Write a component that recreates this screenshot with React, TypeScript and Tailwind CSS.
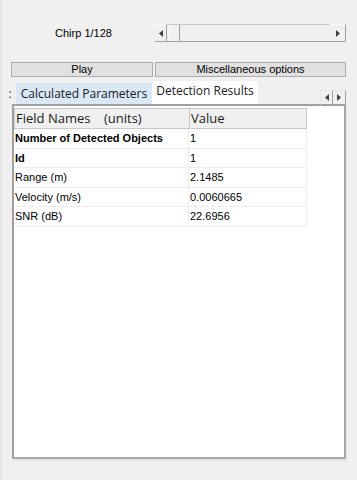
import React from "react";

const rows: { name: string; value: string; bold?: boolean }[] = [
  { name: "Number of Detected Objects", value: "1", bold: true },
  { name: "Id", value: "1", bold: true },
  { name: "Range (m)", value: "2.1485" },
  { name: "Velocity (m/s)", value: "0.0060665" },
  { name: "SNR (dB)", value: "22.6956" },
];

function ArrowBox({ dir, className }: { dir: "l" | "r"; className?: string }) {
  return (
    <div
      className={
        "flex items-center justify-center bg-[#f0f0f0] border-r border-b border-[#a0a0a0] " +
        (className ?? "")
      }
    >
      <svg width="4" height="7" viewBox="0 0 4 7">
        {dir === "l" ? (
          <path d="M4 0 L0 3.5 L4 7 Z" fill="#404040" />
        ) : (
          <path d="M0 0 L4 3.5 L0 7 Z" fill="#404040" />
        )}
      </svg>
    </div>
  );
}

export default function App() {
  return (
    <div
      className="w-[357px] h-[480px] bg-[#f0f0f0] relative overflow-hidden border-l-2 border-[#e4e4e4]"
      style={{ fontFamily: '"Liberation Sans", Arial, sans-serif' }}
    >
      {/* Chirp row */}
      <div className="flex items-center h-[18px] mt-[24px]">
        <div className="w-[153px] text-center text-[11px] text-black pl-[10px]">Chirp 1/128</div>
        <div className="w-[191px] h-[18px] flex">
          <ArrowBox dir="l" className="w-[12px] h-[18px] border-t border-t-[#f8f8f8]" />
          <div className="flex-1 flex border-t border-[#c8c8c8] border-b border-b-[#a0a0a0]">
            <div className="w-[11px] ml-[2px] h-full bg-[#f0f0f0] border-l border-l-[#ffffff] border-r border-r-[#a0a0a0]" />
            <div className="flex-1" />
          </div>
          <ArrowBox dir="r" className="w-[16px] h-[18px] border-t border-t-[#f8f8f8]" />
        </div>
      </div>

      {/* Buttons row */}
      <div className="flex mt-[20px] ml-[9px] w-[335px] h-[15px] gap-[2px]">
        <div className="w-[142px] h-full bg-[#e1e1e1] border border-[#adadad] flex items-center justify-center text-[11px] text-black">
          Play
        </div>
        <div className="flex-1 h-full bg-[#e1e1e1] border border-[#adadad] flex items-center justify-center text-[11px] text-black">
          Miscellaneous options
        </div>
      </div>

      {/* Tabs row */}
      <div
        className="flex items-end mt-[4px] h-[23px] relative"
        style={{ fontFamily: '"Open Sans", "Noto Sans", sans-serif' }}
      >
        <div className="w-[14px] h-[21px] text-[12px] text-[#333] flex items-center justify-center pl-[2px]">:</div>
        <div className="w-[136px] h-[21px] bg-[#d9e8f5] flex items-center justify-center text-[12px] text-[#1a1a1a]">
          Calculated Parameters
        </div>
        <div className="w-[106px] h-[23px] bg-white flex items-start justify-center pt-[1px] text-[12px] text-[#1a1a1a]">
          Detection Results
        </div>
        <div className="absolute right-[11px] bottom-[-1px] flex">
          <ArrowBox dir="l" className="w-[13px] h-[15px] border-l border-t border-[#a0a0a0] border-l-[#e8e8e8] border-t-[#e8e8e8]" />
          <ArrowBox dir="r" className="w-[13px] h-[15px] border-t border-t-[#e8e8e8]" />
        </div>
      </div>

      {/* Panel */}
      <div className="ml-[10px] w-[334px] h-[355px] bg-white border-2 border-t-[#a0a0a0] border-l-[#a0a0a0] border-r-[#a8a8a8] border-b-[#a8a8a8] shadow-[1px_2px_0_#e4e4e4] pt-[2px]">
        <div className="w-[293px]">
          {/* Header */}
          <div
            className="flex h-[21px] bg-[#f0f0f0] border border-[#c8c8c8] text-[13px] text-[#1a1a1a]"
            style={{ fontFamily: '"Open Sans", "Noto Sans", sans-serif' }}
          >
            <div className="w-[175px] border-r border-[#c8c8c8] px-[1px] flex items-center whitespace-pre">
              Field Names    (units)
            </div>
            <div className="flex-1 px-[1px] flex items-center">Value</div>
          </div>
          {rows.map((r) => (
            <div key={r.name} className="flex h-[19.6px] border-b border-[#eeeeee] border-r text-[11px] text-black">
              <div className={"w-[175px] px-[1px] flex items-center border-r border-[#eeeeee] " + (r.bold ? "font-bold" : "")}>
                {r.name}
              </div>
              <div className="flex-1 px-[1px] flex items-center">{r.value}</div>
            </div>
          ))}
        </div>
      </div>
    </div>
  );
}
